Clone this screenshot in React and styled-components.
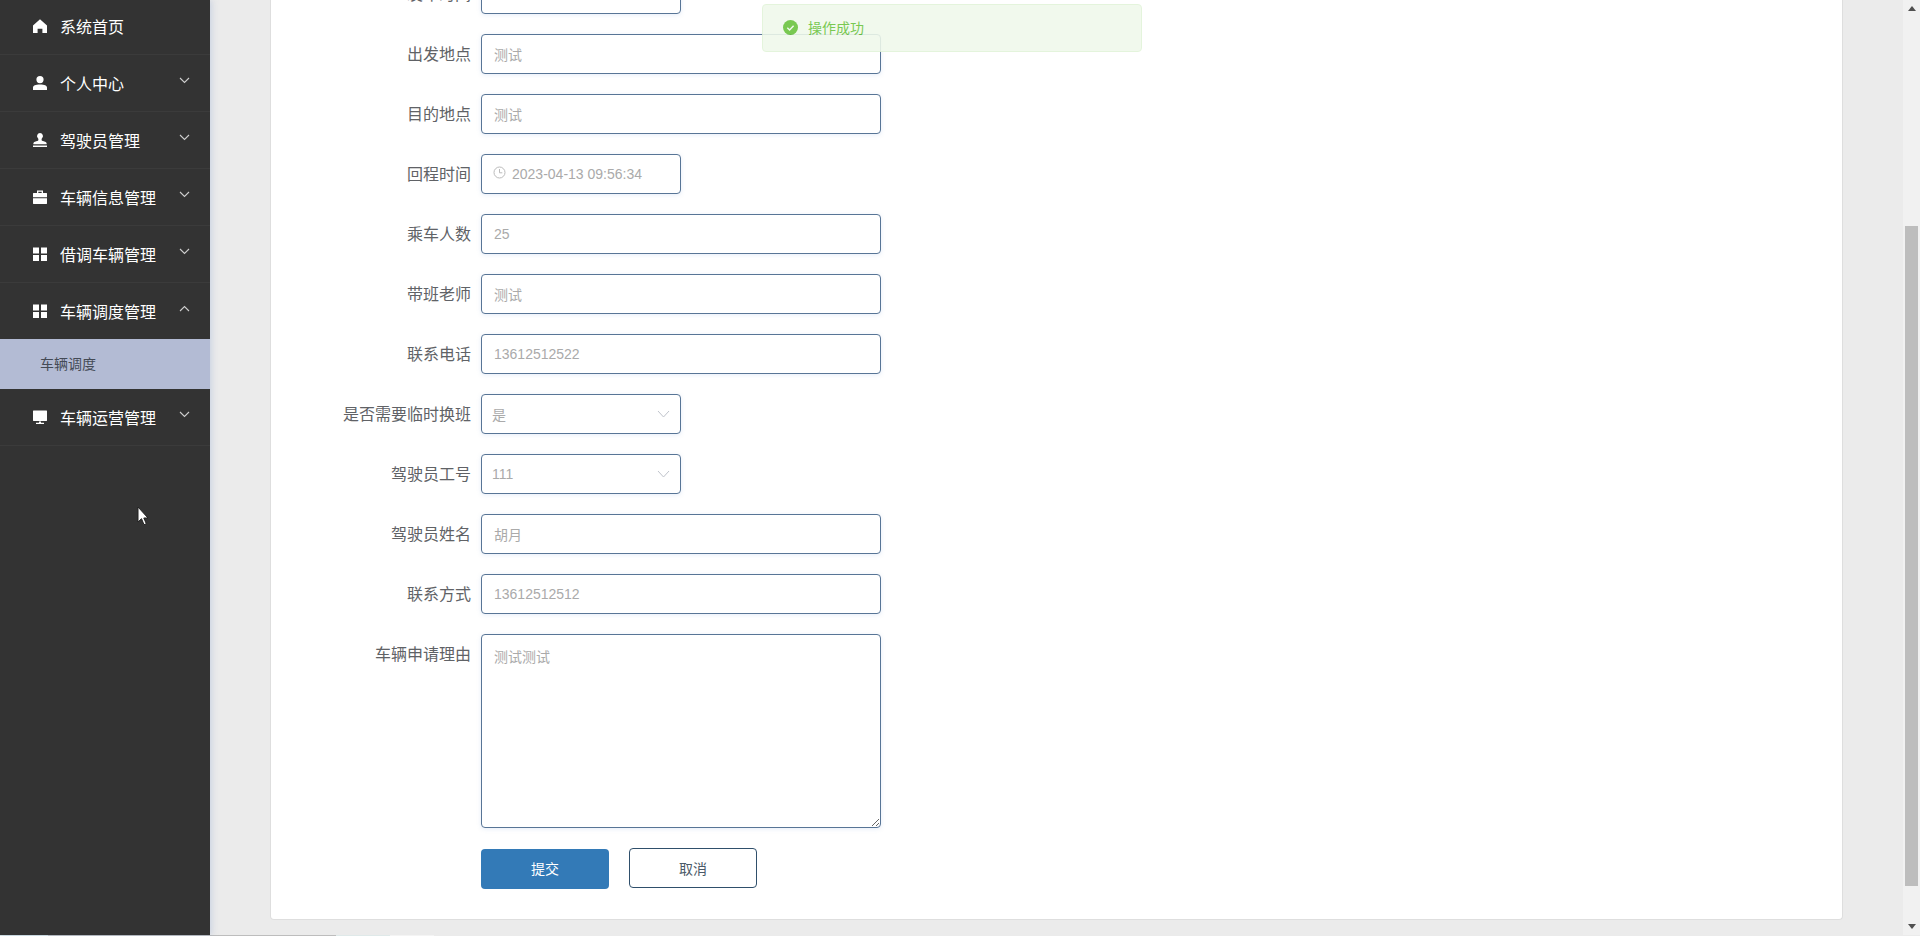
import React from 'react'
import styled, { createGlobalStyle } from 'styled-components'

const GlobalStyle = createGlobalStyle`
    html, body {
        margin: 0;
        padding: 0;
        height: 100%;
        overflow: hidden;
        background: #ebebeb;
        font-family: "Liberation Sans", "Noto Sans CJK SC", sans-serif;
    }
`;

const Page = styled.div`
    position: relative;
    width: 1920px;
    height: 936px;
    display: flex;
    flex-direction: column;
    overflow: hidden;
`;

const Body = styled.div`
    flex: 1;
    min-height: 0;
    display: flex;
`;

const Sidebar = styled.aside`
    width: 210px;
    flex-shrink: 0;
    background: #333333;
    box-shadow: 1px 0 7px rgba(120, 150, 200, 0.35);
    z-index: 1;
    overflow: hidden;
`;

const MenuList = styled.ul`
    list-style: none;
    margin: -2px 0 0;
    padding: 0;
`;

const MenuItem = styled.li`
    height: ${(p) => (p.$open ? '56px' : '57px')};
    box-sizing: border-box;
    display: flex;
    align-items: center;
    padding: 0 20px 0 32px;
    color: #ffffff;
    font-size: 16px;
    border-bottom: ${(p) => (p.$open ? 'none' : '1px solid #3b3b3b')};
`;

const MenuIcon = styled.svg`
    width: 16px;
    height: 16px;
    fill: #ffffff;
    margin-right: 12px;
    flex-shrink: 0;
`;

const MenuText = styled.span`
    flex: 1;
`;

const Chevron = styled.svg`
    width: 11px;
    height: 7px;
    margin-top: -6px;
    fill: none;
    stroke: #cfcfcf;
    stroke-width: 1.1;
`;

const SubItem = styled.li`
    height: 50px;
    box-sizing: border-box;
    display: flex;
    align-items: center;
    padding: 0 0 2px 40px;
    background: #b3bbd4;
    color: #444a55;
    font-size: 14px;
`;

const Main = styled.main`
    flex: 1;
    min-width: 0;
    padding: 0 60px;
    overflow: hidden;
`;

const Card = styled.section`
    width: 1573px;
    box-sizing: border-box;
    background: #ffffff;
    border: 1px solid #dedede;
    border-top: none;
    border-radius: 0 0 4px 4px;
    padding-bottom: 30px;
`;

const Form = styled.form`
    margin-top: -26px;
    display: flex;
    flex-direction: column;
    gap: 20px;
`;

const Row = styled.div`
    display: flex;
    gap: 10px;
`;

const Label = styled.label`
    width: 200px;
    flex-shrink: 0;
    text-align: right;
    font-size: 16px;
    line-height: 42px;
    height: 40px;
    color: #606266;
`;

const Field = styled.div`
    width: ${(p) => (p.$short ? '200px' : '400px')};
    height: 40px;
    box-sizing: border-box;
    display: flex;
    align-items: center;
    justify-content: space-between;
    padding: 0 ${(p) => (p.$short ? '10px' : '13px')} 0 ${(p) => (p.$select ? '10px' : '12px')};
    border: 1px solid #587596;
    border-radius: 4px;
    box-shadow: 0 1px 4px rgba(150, 180, 225, 0.25);
    background: #ffffff;
    color: #aaaaaa;
    font-size: 14px;
`;

const DateValue = styled.span`
    display: flex;
    align-items: center;
    gap: 6px;
    margin-left: -1px;
`;

const ClockIcon = styled.svg`
    width: 13px;
    height: 13px;
    margin-top: -3px;
    fill: none;
    stroke: #bbbbbb;
    stroke-width: 1;
`;

const SelectArrow = styled.svg`
    width: 13px;
    height: 8px;
    fill: none;
    stroke: #c0c4cc;
    stroke-width: 1;
`;

const Area = styled.textarea`
    width: 400px;
    height: 194px;
    box-sizing: border-box;
    padding: 11px 12px;
    border: 1px solid #587596;
    border-radius: 4px;
    box-shadow: 0 1px 4px rgba(150, 180, 225, 0.25);
    outline: none;
    resize: vertical;
    font-family: inherit;
    font-size: 14px;
    color: #aaaaaa;
`;

const Actions = styled.div`
    display: flex;
    align-items: flex-start;
    gap: 20px;
    margin-left: 210px;
`;

const Button = styled.button`
    width: 128px;
    height: 40px;
    box-sizing: border-box;
    border-radius: 4px;
    font-family: inherit;
    font-size: 14px;
    padding: 0 0 ${(p) => (p.$primary ? '2px' : '0')};
    margin-top: ${(p) => (p.$primary ? '1px' : '0')};
    border: ${(p) => (p.$primary ? 'none' : '1px solid #2f4f6b')};
    background: ${(p) => (p.$primary ? '#337ab7' : '#ffffff')};
    color: ${(p) => (p.$primary ? '#ffffff' : '#4a5a68')};
`;

const Scrollbar = styled.div`
    width: 17px;
    flex-shrink: 0;
    display: flex;
    flex-direction: column;
    background: #f1f1f1;
`;

const ScrollButton = styled.div`
    height: 17px;
    flex-shrink: 0;
    display: flex;
    align-items: center;
    justify-content: center;
`;

const ScrollArrow = styled.svg`
    width: 8px;
    height: 5px;
    fill: #505050;
`;

const ScrollTrack = styled.div`
    flex: 1;
    padding: 209px 2px 0;
`;

const ScrollThumb = styled.div`
    height: 660px;
    background: #bdbdbd;
`;

const BottomStrip = styled.div`
    height: 1px;
    flex-shrink: 0;
    display: flex;
    background: #ebebeb;
`;

const StripPart = styled.div`
    width: ${(p) => p.$w}px;
    background: ${(p) => p.$c};
`;

const Toast = styled.div`
    position: absolute;
    top: 4px;
    left: 762px;
    width: 380px;
    height: 48px;
    box-sizing: border-box;
    display: flex;
    align-items: center;
    gap: 10px;
    padding: 0 0 2px 20px;
    background: #f0f9eb;
    border: 1px solid #e1f3d8;
    border-radius: 4px;
    color: #67c23a;
    font-size: 14px;
    opacity: 0.88;
    z-index: 2;
`;

const ToastIcon = styled.svg`
    width: 15px;
    height: 15px;
    flex-shrink: 0;
`;

const Cursor = styled.svg`
    position: absolute;
    left: 137px;
    top: 506px;
    width: 12px;
    height: 20px;
    z-index: 3;
`;

const icons = {
    home: <path d="M8 1.2 15 7.6V15h-4.6v-4.2H5.6V15H1V7.6z" />,
    user: <path d="M8 1a3.6 3.6 0 1 1 0 7.2A3.6 3.6 0 0 1 8 1zM1 15v-2.4C1 10.6 3.4 9.4 8 9.4s7 1.2 7 3.2V15z" />,
    custom: <path d="M8 1a3 3 0 0 1 2 5.2c-.5.5-.6 1.8 0 2.6.8.3 4 .8 4.600 2.200v1.200H1.400V11c.6-1.400 3.800-1.900 4.600-2.200.6-.8.5-2.100 0-2.600A3 3 0 0 1 8 1zM1 13.600h14V15H1z" />,
    case: <path d="M5 1.500h6V4h3.500c.3 0 .5.200.5.500V8.300H1V4.500c0-.3.200-.5.500-.5H5zM6.300 2.800V4h3.400V2.800zM1 9.300h14V14.500c0 .3-.2.500-.5.500h-13c-.3 0-.5-.2-.5-.5z" />,
    grid: <path d="M1 1.500h6v6H1zM9 1.500h6v6H9zM1 9h6v6H1zM9 9h6v6H9z" />,
    monitor: <path d="M1.500 1.500h13c.3 0 .5.200.5.500v9.500c0 .3-.2.500-.5.500h-13c-.3 0-.5-.2-.5-.5V2c0-.3.200-.5.500-.5zM7 12.500h2v1.300h3V15H4v-1.200h3z" />,
}

const menus = [
    { text: '系统首页', icon: 'home', plain: true },
    { text: '个人中心', icon: 'user' },
    { text: '驾驶员管理', icon: 'custom' },
    { text: '车辆信息管理', icon: 'case' },
    { text: '借调车辆管理', icon: 'grid' },
    { text: '车辆调度管理', icon: 'grid', open: true, sub: '车辆调度' },
    { text: '车辆运营管理', icon: 'monitor' },
]

const fields = [
    { label: '发车时间', value: '' , short: true },
    { label: '出发地点', value: '测试' },
    { label: '目的地点', value: '测试' },
    { label: '回程时间', value: '2023-04-13 09:56:34', short: true, date: true },
    { label: '乘车人数', value: '25' },
    { label: '带班老师', value: '测试' },
    { label: '联系电话', value: '13612512522' },
    { label: '是否需要临时换班', value: '是', short: true, select: true },
    { label: '驾驶员工号', value: '111', short: true, select: true },
    { label: '驾驶员姓名', value: '胡月' },
    { label: '联系方式', value: '13612512512' },
]

const App = () => {
    return (
        <Page>
            <GlobalStyle />
            <Body>
                <Sidebar>
                    <MenuList>
                        {menus.map((m) => (
                            <React.Fragment key={m.text}>
                                <MenuItem $open={m.open}>
                                    <MenuIcon viewBox="0 0 16 16">{icons[m.icon]}</MenuIcon>
                                    <MenuText>{m.text}</MenuText>
                                    {!m.plain && (
                                        <Chevron viewBox="0 0 11 7">
                                            <path d={m.open ? 'M1 6l4.500-4.500L10 6' : 'M1 1l4.500 4.500L10 1'} />
                                        </Chevron>
                                    )}
                                </MenuItem>
                                {m.sub && <SubItem>{m.sub}</SubItem>}
                            </React.Fragment>
                        ))}
                    </MenuList>
                </Sidebar>
                <Main>
                    <Card>
                        <Form>
                            {fields.map((f) => (
                                <Row key={f.label}>
                                    <Label>{f.label}</Label>
                                    <Field $short={f.short} $select={f.select}>
                                        {f.date ? (
                                            <DateValue>
                                                <ClockIcon viewBox="0 0 13 13">
                                                    <circle cx="6.500" cy="6.500" r="5.500" />
                                                    <path d="M6.500 3v3.800h2.800" />
                                                </ClockIcon>
                                                {f.value}
                                            </DateValue>
                                        ) : (
                                            <span>{f.value}</span>
                                        )}
                                        {f.select && (
                                            <SelectArrow viewBox="0 0 13 8">
                                                <path d="M1 1l5.500 6L12 1" />
                                            </SelectArrow>
                                        )}
                                    </Field>
                                </Row>
                            ))}
                            <Row>
                                <Label>车辆申请理由</Label>
                                <Area readOnly defaultValue="测试测试" />
                            </Row>
                            <Actions>
                                <Button type="button" $primary>提交</Button>
                                <Button type="button">取消</Button>
                            </Actions>
                        </Form>
                    </Card>
                </Main>
                <Scrollbar>
                    <ScrollButton>
                        <ScrollArrow viewBox="0 0 8 5"><path d="M4 0l4 5H0z" /></ScrollArrow>
                    </ScrollButton>
                    <ScrollTrack>
                        <ScrollThumb />
                    </ScrollTrack>
                    <ScrollButton>
                        <ScrollArrow viewBox="0 0 8 5"><path d="M0 0h8L4 5z" /></ScrollArrow>
                    </ScrollButton>
                </Scrollbar>
            </Body>
            <BottomStrip>
                <StripPart $w={48} $c="#d8e4e4" />
                <StripPart $w={288} $c="#bdbdbd" />
                <StripPart $w={54} $c="#dfe9e9" />
                <StripPart $w={44} $c="#f4f4f4" />
            </BottomStrip>
            <Toast>
                <ToastIcon viewBox="0 0 15 15">
                    <circle cx="7.500" cy="7.500" r="7.500" fill="#67c23a" />
                    <path d="M4.300 7.700l2.300 2.300 4-4.300" fill="none" stroke="#f0f9eb" strokeWidth="1.400" />
                </ToastIcon>
                操作成功
            </Toast>
            <Cursor viewBox="0 0 12 20">
                <path d="M1 1v15l3.500-3.300 2.500 6 2.300-1-2.500-5.700H11z" fill="#ffffff" stroke="#222222" strokeWidth="1" />
            </Cursor>
        </Page>
    )
}

export default App
